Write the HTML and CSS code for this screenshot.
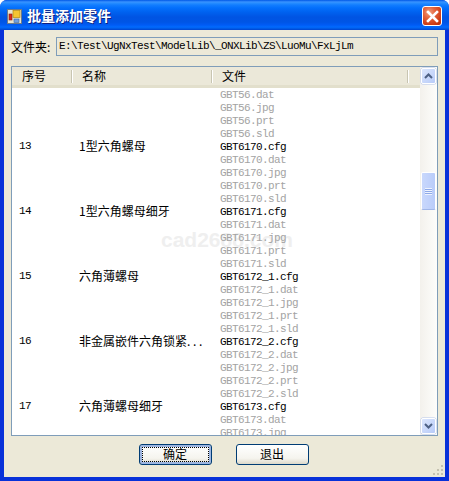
FILE: index.html
```html
<!DOCTYPE html>
<html lang="zh">
<head>
<meta charset="utf-8">
<title>批量添加零件</title>
<link rel="stylesheet" href="styles.css">
</head>
<body>
<div class="window">
  <header class="titlebar">
    <svg class="app-icon" width="15" height="15" viewBox="0 0 15 15">
      <rect x="0.5" y="0.5" width="14" height="14" fill="#e8e4d0" stroke="#6a7a8a"/>
      <rect x="6" y="1.5" width="7" height="7" fill="#f5c431" stroke="#b58a10" stroke-width="0.7"/>
      <rect x="2" y="5" width="3" height="6" fill="#d8281c" stroke="#8a1a10" stroke-width="0.6"/>
      <rect x="7" y="10" width="5" height="3.5" fill="#6f9fe0" stroke="#3a64a8" stroke-width="0.6"/>
    </svg>
    <span class="title">批量添加零件</span>
    <button class="close" aria-label="关闭">
      <svg width="13" height="13" viewBox="0 0 13 13"><path d="M2 2 L11 11 M11 2 L2 11" stroke="#fff" stroke-width="2.6" stroke-linecap="square" fill="none"/></svg>
    </button>
  </header>
  <main class="client">
    <div class="path-row">
      <span class="path-label">文件夹:</span>
      <div class="path-field">E:\Test\UgNxTest\ModelLib\_ONXLib\ZS\LuoMu\FxLjLm</div>
    </div>
    <div class="list">
      <div class="list-main">
        <div class="list-head">
          <div class="hcol hcol-a">序号</div>
          <div class="hcol hcol-b">名称</div>
          <div class="hcol hcol-c">文件</div>
        </div>
        <div class="list-body">
          <div class="watermark">cad2688.com</div>
          <div class="row">
            <div class="c-no"></div><div class="c-name"></div>
            <div class="c-files"><div class="gray">GBT56.dat</div><div class="gray">GBT56.jpg</div><div class="gray">GBT56.prt</div><div class="gray">GBT56.sld</div></div>
          </div>
          <div class="row">
            <div class="c-no">13</div><div class="c-name">1型六角螺母</div>
            <div class="c-files"><div>GBT6170.cfg</div><div class="gray">GBT6170.dat</div><div class="gray">GBT6170.jpg</div><div class="gray">GBT6170.prt</div><div class="gray">GBT6170.sld</div></div>
          </div>
          <div class="row">
            <div class="c-no">14</div><div class="c-name">1型六角螺母细牙</div>
            <div class="c-files"><div>GBT6171.cfg</div><div class="gray">GBT6171.dat</div><div class="gray">GBT6171.jpg</div><div class="gray">GBT6171.prt</div><div class="gray">GBT6171.sld</div></div>
          </div>
          <div class="row">
            <div class="c-no">15</div><div class="c-name">六角薄螺母</div>
            <div class="c-files"><div>GBT6172_1.cfg</div><div class="gray">GBT6172_1.dat</div><div class="gray">GBT6172_1.jpg</div><div class="gray">GBT6172_1.prt</div><div class="gray">GBT6172_1.sld</div></div>
          </div>
          <div class="row">
            <div class="c-no">16</div><div class="c-name">非金属嵌件六角锁紧<span class="dots">...</span></div>
            <div class="c-files"><div>GBT6172_2.cfg</div><div class="gray">GBT6172_2.dat</div><div class="gray">GBT6172_2.jpg</div><div class="gray">GBT6172_2.prt</div><div class="gray">GBT6172_2.sld</div></div>
          </div>
          <div class="row">
            <div class="c-no">17</div><div class="c-name">六角薄螺母细牙</div>
            <div class="c-files"><div>GBT6173.cfg</div><div class="gray">GBT6173.dat</div><div class="gray">GBT6173.jpg</div></div>
          </div>
        </div>
      </div>
      <div class="scrollbar">
        <div class="sb-btn">
          <svg width="9" height="6" viewBox="0 0 9 6"><path d="M1 5 L4.5 1.5 L8 5" fill="none" stroke="#4d6185" stroke-width="2"/></svg>
        </div>
        <div class="sb-track"><div class="sb-thumb"><span class="grip-lines"></span></div></div>
        <div class="sb-btn">
          <svg width="9" height="6" viewBox="0 0 9 6"><path d="M1 1 L4.5 4.5 L8 1" fill="none" stroke="#4d6185" stroke-width="2"/></svg>
        </div>
      </div>
    </div>
    <div class="actions">
      <button class="btn btn-default"><span class="btn-focus">确定</span></button>
      <button class="btn"><span class="btn-focus plain">退出</span></button>
    </div>
    <svg class="size-grip" width="11" height="11" viewBox="0 0 11 11" fill="#c5c2b0">
      <rect x="8" y="0" width="2" height="2"/>
      <rect x="4" y="4" width="2" height="2"/><rect x="8" y="4" width="2" height="2"/>
      <rect x="0" y="8" width="2" height="2"/><rect x="4" y="8" width="2" height="2"/><rect x="8" y="8" width="2" height="2"/>
    </svg>
  </main>
</div>
</body>
</html>
```

FILE: styles.css
```css
* { box-sizing: border-box; }
html, body { margin: 0; padding: 0; background: #fff; }
body {
  width: 449px;
  height: 481px;
  overflow: hidden;
  font-family: "Noto Sans CJK SC", "Liberation Sans", sans-serif;
  font-size: 12px;
  color: #000;
}
.window {
  width: 449px;
  height: 481px;
  display: flex;
  flex-direction: column;
  border-radius: 7px 7px 0 0;
  overflow: hidden;
  background: #0831d9;
}
.titlebar {
  height: 30px;
  flex: none;
  display: flex;
  align-items: center;
  padding: 2px 7px 0 7px;
  background: linear-gradient(to bottom, #0058e6 0, #3a93ff 2px, #288eff 3px, #127dff 5px, #036ffc 8px, #0062f0 12px, #0054e3 17px, #0055e5 22px, #005bf5 25px, #026afe 27px, #0062ef 28px, #0043cf 30px);
}
.app-icon { flex: none; margin-right: 5px; }
.title {
  flex: 1;
  color: #fff;
  font-size: 14px;
  font-weight: 700;
  line-height: 14px;
  padding-bottom: 2px;
  text-shadow: 1px 1px 0 #0f1f80;
}
.close {
  width: 20px;
  height: 20px;
  padding: 0;
  margin: 0;
  border: 1px solid #fff;
  border-radius: 3px;
  background: radial-gradient(circle at 35% 30%, #f0a080 0, #e2623c 35%, #cc3a12 75%, #b02e0c 100%);
  display: flex;
  align-items: center;
  justify-content: center;
}
.client {
  position: relative;
  flex: 1;
  margin: 0 4px 4px 4px;
  background: #ece9d8;
  padding: 7px 7px 0 7px;
  display: flex;
  flex-direction: column;
}
.path-row {
  display: flex;
  align-items: center;
  height: 19px;
  flex: none;
}
.path-label { width: 45px; flex: none; font-size: 12px; line-height: 16px; }
.path-field {
  flex: 1;
  height: 19px;
  border: 1px solid #7f9db9;
  background: #ece9d8;
  padding-left: 2px;
  font-family: "Liberation Mono", "DejaVu Sans Mono", monospace;
  font-size: 11px;
  letter-spacing: -0.6px;
  line-height: 17px;
  white-space: nowrap;
}
.list {
  margin-top: 10px;
  height: 370px;
  flex: none;
  border: 1px solid #7f9db9;
  background: #fff;
  display: flex;
}
.list-main {
  flex: 1;
  min-width: 0;
  display: flex;
  flex-direction: column;
}
.list-head {
  height: 21px;
  flex: none;
  display: flex;
  background: #ebe8d9;
  border-bottom: 3px solid #e2dfcc;
  line-height: 17px;
}
.hcol { position: relative; padding-left: 10px; }
.hcol::after {
  content: "";
  position: absolute;
  right: 0;
  top: 3px;
  width: 1px;
  height: 13px;
  background: #c8c5b2;
  box-shadow: 1px 0 0 #fff;
}
.hcol-a { width: 60px; }
.hcol-b { width: 140px; }
.hcol-c { width: 196px; }
.list-body {
  position: relative;
  flex: 1;
  min-height: 0;
  overflow: hidden;
  padding-top: 1px;
}
.watermark {
  position: absolute;
  left: 149px;
  top: 140px;
  font-family: "Liberation Sans", sans-serif;
  font-size: 21px;
  font-weight: 700;
  line-height: 24px;
  color: #efefef;
  white-space: nowrap;
}
.row {
  position: relative;
  display: flex;
  line-height: 13px;
}
.c-no {
  width: 60px;
  flex: none;
  padding-left: 7px;
  margin-top: -1px;
  font-family: "Liberation Mono", "DejaVu Sans Mono", monospace;
  font-size: 11px;
  letter-spacing: -0.6px;
}
.c-name {
  width: 141px;
  flex: none;
  padding-left: 7px;
  font-size: 12px;
  margin-top: -2px;
  white-space: nowrap;
}
.dots { letter-spacing: 2.7px; }
.c-files {
  flex: 1;
  padding-left: 7px;
  font-family: "Liberation Mono", "DejaVu Sans Mono", monospace;
  font-size: 11px;
  letter-spacing: -0.6px;
}
.gray { color: #a3a3a3; }
.scrollbar {
  width: 17px;
  flex: none;
  display: flex;
  flex-direction: column;
  padding: 1px 0;
  background: linear-gradient(to right, #f3f1ec, #fdfdfb);
}
.sb-btn {
  height: 16px;
  flex: none;
  margin: 0 1px;
  display: flex;
  align-items: center;
  justify-content: center;
  border: 1px solid #fff;
  border-radius: 2px;
  background: linear-gradient(135deg, #dbe6fd, #b8cbf8);
  box-shadow: 0 0 0 0.5px #b5c5ea;
}
.sb-track { flex: 1; min-height: 0; padding: 88px 1px 0 1px; }
.sb-thumb {
  height: 38px;
  border: 1px solid #fff;
  border-bottom-color: #a0b6e8;
  border-radius: 2px;
  background: linear-gradient(to right, #c9d8fc, #b9ccfa);
  display: flex;
  align-items: center;
  justify-content: center;
}
.grip-lines {
  display: block;
  width: 7px;
  height: 7px;
  background: repeating-linear-gradient(to bottom, #eef3fe 0, #eef3fe 1px, #8ea9e8 1px, #8ea9e8 2px);
}
.actions {
  flex: none;
  display: flex;
  justify-content: center;
  gap: 24px;
  margin-top: 8px;
  padding-right: 1px;
}
.btn {
  width: 73px;
  height: 21px;
  padding: 0;
  border: 1px solid #003c74;
  border-radius: 3px;
  background: linear-gradient(to bottom, #fff 0, #f5f4ee 70%, #dcd8ca 100%);
  font: inherit;
  color: #000;
  display: flex;
  align-items: stretch;
}
.btn-default {
  box-shadow: inset 0 0 0 2px #9db5e0;
}
.btn-focus {
  flex: 1;
  margin: 2px;
  border: 1px dotted #000;
  padding-right: 1px;
  line-height: 11px;
  text-align: center;
}
.btn-focus.plain { border-color: transparent; }
.size-grip {
  position: absolute;
  right: 1px;
  bottom: 1px;
}
```
